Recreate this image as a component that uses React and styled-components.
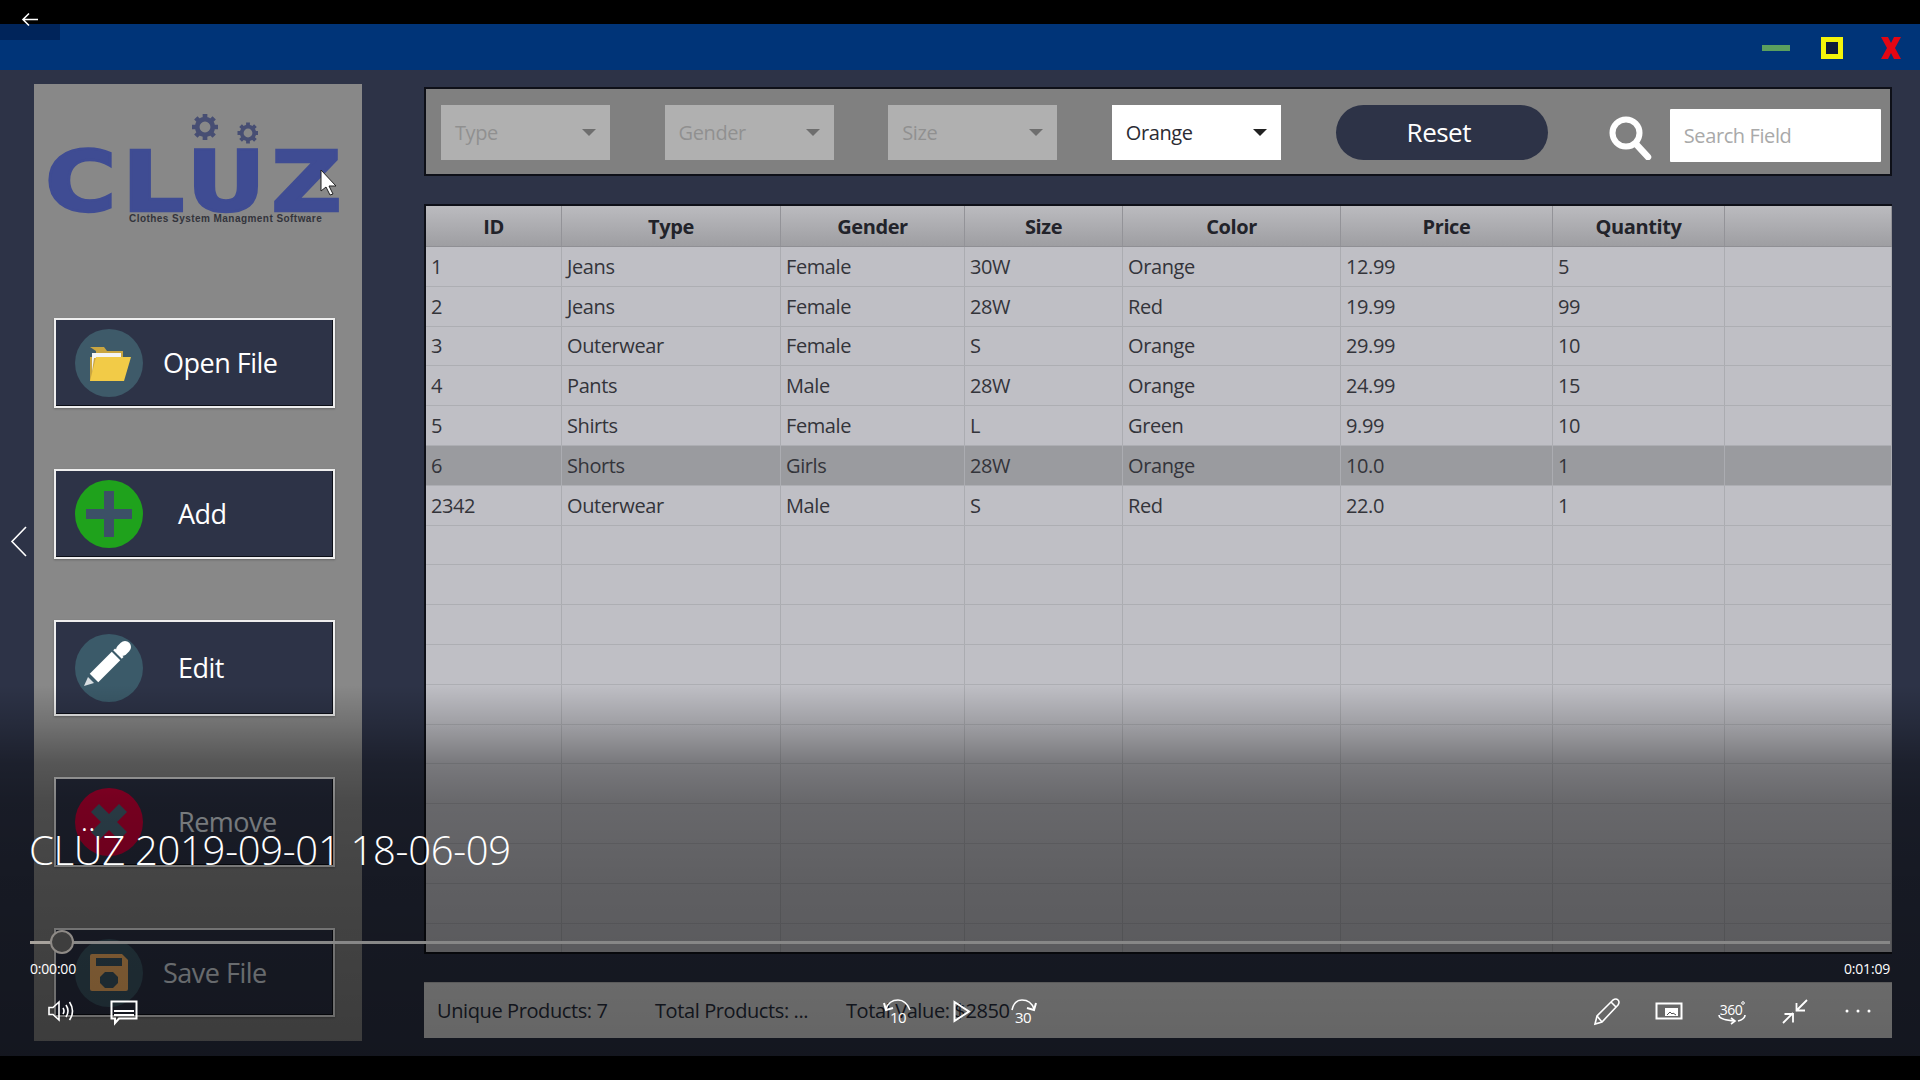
import React from 'react';
import styled, { createGlobalStyle } from 'styled-components';

const Global = createGlobalStyle`
  html, body { margin: 0; padding: 0; background: #000; }
  body { width: 1920px; height: 1080px; overflow: hidden; font-family: "Open Sans", "Noto Sans", sans-serif; letter-spacing: -0.4px; }
  * { box-sizing: border-box; }
`;

const Screen = styled.div`
  position: relative;
  width: 1920px;
  height: 1080px;
  display: flex;
  flex-direction: column;
  background: #000;
  overflow: hidden;
`;
const BlackStrip = styled.div`
  height: 24px;
  flex: none;
  background: #000;
`;
const TitleBar = styled.header`
  height: 46px;
  flex: none;
  background: #003478;
  display: flex;
  align-items: center;
  justify-content: flex-end;
  padding: 2px 18px 0 0;
`;
const WinMin = styled.div`
  width: 28px;
  height: 6px;
  background: #5b9f5e;
  margin-right: 31px;
`;
const WinMax = styled.div`
  width: 22px;
  height: 22px;
  border: 5px solid #f4f40a;
  background: #101c3a;
  margin-right: 37px;
`;
const WinClose = styled.svg`
  width: 22px;
  height: 24px;
  display: block;
`;
const Main = styled.main`
  flex: 1;
  background: #2d3347;
  display: flex;
  align-items: flex-start;
  padding-left: 34px;
`;
const Sidebar = styled.aside`
  width: 328px;
  height: 957px;
  margin-top: 14px;
  background: #888888;
  padding-left: 20px;
  display: flex;
  flex-direction: column;
`;
const LogoBlock = styled.div`
  position: relative;
  height: 234px;
  flex: none;
  margin-left: -6px;
  padding-top: 68px;
`;
const LogoWord = styled.div`
  font-family: "DejaVu Sans", sans-serif;
  font-weight: 700;
  font-size: 84px;
  line-height: 60px;
  letter-spacing: 5px;
  color: #3f4c93;
  -webkit-text-stroke: 2.5px #3f4c93;
  white-space: nowrap;
  transform: translateX(-3px) scaleX(1.158);
  transform-origin: left center;
`;
const LogoTag = styled.div`
  margin: 0 0 0 81px;
  font-family: "Liberation Sans", sans-serif;
  font-weight: 700;
  font-size: 10px;
  line-height: 13px;
  letter-spacing: 0.45px;
  color: #33343c;
  white-space: nowrap;
`;
const Gears = styled.svg`
  position: absolute;
  left: 120px;
  top: 26px;
  width: 90px;
  height: 40px;
`;
const Cursor = styled.svg`
  position: absolute;
  left: 272px;
  top: 85px;
  width: 18px;
  height: 27px;
`;
const SideButtons = styled.div`
  display: flex;
  flex-direction: column;
  gap: 61px;
`;
const SideButton = styled.button`
  width: 281px;
  height: ${p => p.$h}px;
  flex: none;
  padding: 0 0 0 19px;
  display: flex;
  align-items: center;
  gap: ${p => p.$gap}px;
  background: #2d3347;
  border: 2px solid #eeeeee;
  box-shadow: inset -1px -1px 0 #0c0f18, 0 1px 2px rgba(0,0,0,.25);
  color: ${p => p.$dim ? '#dfe4ea' : '#ffffff'};
  font-family: "Open Sans", sans-serif;
  font-size: 27px;
  letter-spacing: -0.5px;
  line-height: 36px;
  cursor: pointer;
`;
const IconDisc = styled.span`
  width: 68px;
  height: 68px;
  flex: none;
  display: block;
`;
const Content = styled.section`
  width: 1468px;
  margin-left: 62px;
  padding-top: 17px;
  display: flex;
  flex-direction: column;
  gap: 28px;
`;
const Toolbar = styled.div`
  height: 89px;
  background: #808080;
  border: 2px solid #0e1018;
  padding: 16px 0 0 15px;
  display: flex;
  align-items: flex-start;
`;
const Selects = styled.div`
  display: flex;
  gap: 54.6px;
`;
const SelectBox = styled.div`
  width: 169px;
  height: 55px;
  padding: 0 14px;
  display: flex;
  align-items: center;
  justify-content: space-between;
  background: ${p => p.$on ? '#ffffff' : '#b0b0b0'};
  color: ${p => p.$on ? '#2b2b33' : '#909090'};
  font-size: 20px;
`;
const Caret = styled.span`
  width: 0;
  height: 0;
  border-left: 7px solid transparent;
  border-right: 7px solid transparent;
  border-top: 7px solid ${p => p.$on ? '#222222' : '#6e6e6e'};
`;
const ResetButton = styled.button`
  width: 212px;
  height: 55px;
  margin-left: 55px;
  padding: 0 6px 2px 0;
  border: 0;
  border-radius: 28px;
  background: #2d3347;
  color: #fff;
  font-family: "Open Sans", sans-serif;
  font-size: 26px;
  letter-spacing: -0.5px;
  cursor: pointer;
`;
const SearchGlass = styled.svg`
  width: 44px;
  height: 44px;
  margin: 11px 0 0 60px;
  flex: none;
`;
const SearchField = styled.div`
  width: 211px;
  height: 53px;
  margin: 4px 0 0 18px;
  padding-left: 14px;
  display: flex;
  align-items: center;
  background: #fff;
  color: #a9a9a9;
  font-size: 20px;
  border-radius: 1px;
`;
const Table = styled.div`
  height: 750px;
  border-top: 2px solid #0e1018;
  border-left: 2px solid #0e1018;
  border-bottom: 2px solid #0e1018;
  background: #bebfc4;
  overflow: hidden;
`;
const Row = styled.div`
  display: grid;
  grid-template-columns: 136px 219px 184px 158px 218px 212px 172px 1fr;
  height: ${p => p.$head ? '41px' : '39.8px'};
  background: ${p => p.$head ? 'linear-gradient(#bbbbbf, #9e9ea2)' : p.$sel ? '#9a9b9f' : '#bfbfc5'};
  border-bottom: 1px solid ${p => p.$head ? '#8f8f94' : '#adaeb3'};
`;
const Cell = styled.div`
  padding-left: 5px;
  display: flex;
  align-items: center;
  border-right: 1px solid #abacb1;
  color: #33343a;
  font-size: 20px;
  white-space: nowrap;
  overflow: hidden;
`;
const HeadCell = styled.div`
  display: flex;
  align-items: center;
  justify-content: center;
  border-right: 1px solid #939398;
  color: #22232a;
  font-size: 20px;
  font-weight: 700;
`;
const StatusBar = styled.footer`
  height: 56px;
  background: #e4e4e4;
  padding-left: 13px;
  display: flex;
  align-items: center;
  color: #2a3040;
  font-size: 20px;
  white-space: nowrap;
  border-top: 1px solid #c4c4c4;
`;
const StatusItem = styled.span`
  width: ${p => p.$w}px;
  flex: none;
`;

const Overlay = styled.div`
  position: absolute;
  inset: 0;
  display: flex;
  flex-direction: column;
  justify-content: flex-end;
  padding: 0 30px 49px;
  background: linear-gradient(to bottom,
    rgba(0,0,0,0) 685px, rgba(0,0,0,.17) 724px, rgba(0,0,0,.37) 763px,
    rgba(0,0,0,.46) 803px, rgba(0,0,0,.5) 880px, rgba(0,0,0,.56) 1056px);
`;
const BackBlock = styled.div`
  position: absolute;
  left: 0;
  top: 0;
  width: 60px;
  height: 40px;
  background: linear-gradient(#000 24px, #00245a 24px);
  display: flex;
  padding: 12px 0 0 21px;
`;
const SideChevron = styled.svg`
  position: absolute;
  left: 9px;
  top: 525px;
  width: 20px;
  height: 33px;
`;
const VideoTitle = styled.div`
  margin: 0 0 50px -1px;
  font-size: 40px;
  font-weight: 300;
  line-height: 60px;
  letter-spacing: -0.3px;
  color: #fff;
  white-space: nowrap;
`;
const Slider = styled.div`
  position: relative;
  height: 24px;
  display: flex;
  align-items: center;
`;
const SliderLine = styled.div`
  flex: 1;
  height: 3px;
  background: linear-gradient(to right, #a8a39d 31px, #878787 31px);
`;
const SliderThumb = styled.span`
  position: absolute;
  left: 20px;
  top: 0;
  width: 24px;
  height: 24px;
  border-radius: 50%;
  border: 2px solid #8e8a86;
  background: #3e3e3e;
`;
const Times = styled.div`
  display: flex;
  justify-content: space-between;
  margin: 5px 0 12px;
  font-size: 14px;
  line-height: 20px;
  letter-spacing: -0.2px;
  color: #fff;
`;
const ControlRow = styled.div`
  display: grid;
  grid-template-columns: 1fr auto 1fr;
  height: 40px;
`;
const ControlGroup = styled.div`
  display: flex;
  gap: 23px;
  justify-content: ${p => p.$align};
  padding: ${p => p.$pad};
`;
const ControlIcon = styled.svg`
  width: 40px;
  height: 40px;
  flex: none;
  fill: none;
  stroke: #fff;
  stroke-width: 1.6;
`;
const IconLabel = styled.text`
  fill: #fff;
  stroke: none;
  font-family: "Open Sans", sans-serif;
  font-size: ${p => p.$size || 15}px;
  letter-spacing: -0.5px;
  text-anchor: middle;
`;

const columns = ['ID', 'Type', 'Gender', 'Size', 'Color', 'Price', 'Quantity', ''];
const rows = [
  ['1', 'Jeans', 'Female', '30W', 'Orange', '12.99', '5'],
  ['2', 'Jeans', 'Female', '28W', 'Red', '19.99', '99'],
  ['3', 'Outerwear', 'Female', 'S', 'Orange', '29.99', '10'],
  ['4', 'Pants', 'Male', '28W', 'Orange', '24.99', '15'],
  ['5', 'Shirts', 'Female', 'L', 'Green', '9.99', '10'],
  ['6', 'Shorts', 'Girls', '28W', 'Orange', '10.0', '1'],
  ['2342', 'Outerwear', 'Male', 'S', 'Red', '22.0', '1'],
  ...Array.from({ length: 11 }, () => ['', '', '', '', '', '', '']),
];

const gearPath = (cx, cy, r, t) => {
  let d = '';
  for (let i = 0; i < 8; i++) {
    const a = (i * Math.PI) / 4;
    d += `M${cx + Math.cos(a) * (r - t)} ${cy + Math.sin(a) * (r - t)}L${cx + Math.cos(a) * r} ${cy + Math.sin(a) * r}`;
  }
  return d;
};

const Gear = ({ cx, cy, r }) => (
  <g>
    <path d={gearPath(cx, cy, r, 5)} stroke="#474e73" strokeWidth={r * 0.36} />
    <circle cx={cx} cy={cy} r={r * 0.6} fill="none" stroke="#474e73" strokeWidth={r * 0.36} />
  </g>
);

const FolderIcon = () => (
  <svg viewBox="0 0 68 68" width="68" height="68">
    <circle cx="34" cy="34" r="34" fill="#3e5a69" />
    <path d="M15 18h14l3 4h16v6H15z M15 18v34h6V22z" fill="#c9a540" />
    <path d="M17 24h29v5H19l-2 14z" fill="#f4f4f4" />
    <path d="M21 28h35l-7 24H15z" fill="#f2cb47" />
  </svg>
);
const AddIcon = () => (
  <svg viewBox="0 0 68 68" width="68" height="68">
    <circle cx="34" cy="34" r="34" fill="#1fa21c" />
    <path d="M29 11h10v18h18v10H39v18H29V39H11V29h18z" fill="#3c5066" />
  </svg>
);
const EditIcon = () => (
  <svg viewBox="0 0 68 68" width="68" height="68">
    <circle cx="34" cy="34" r="34" fill="#3b5a69" />
    <path d="M9 52l4-9 6 6z" fill="#d8dee2" />
    <path d="M19 44l22-22" stroke="#fff" strokeWidth="12" />
    <path d="M42.500 20.500l1.800-1.800" stroke="#fff" strokeWidth="12" />
    <path d="M47 16l3-3" stroke="#fff" strokeWidth="12" strokeLinecap="round" />
  </svg>
);
const RemoveIcon = () => (
  <svg viewBox="0 0 68 68" width="68" height="68">
    <circle cx="34" cy="34" r="34" fill="#d6003a" />
    <path d="M16 24l8-8 10 10 10-10 8 8-10 10 10 10-8 8-10-10-10 10-8-8 10-10z" fill="#4a6a7c" />
  </svg>
);
const SaveIcon = () => (
  <svg viewBox="0 0 68 68" width="68" height="68">
    <circle cx="34" cy="34" r="34" fill="#3e5a69" />
    <path d="M17 15h30l6 6v29a2 2 0 0 1-2 2H17a2 2 0 0 1-2-2V17a2 2 0 0 1 2-2z" fill="#ffb868" />
    <rect x="21" y="19" width="26" height="8" fill="#3e5a69" />
    <path d="M30 33h8l5 5v6l-5 5h-8l-5-5v-6z" fill="#3e5a69" />
  </svg>
);

export default function App() {
  return (
    <Screen>
      <Global />
      <BlackStrip />
      <TitleBar>
        <WinMin />
        <WinMax />
        <WinClose viewBox="0 0 22 24">
          <path d="M1 1h7l3 6 3-6h7l-6 11 6 11h-7l-3-6-3 6H1l6-11z" fill="#e30613" />
        </WinClose>
      </TitleBar>
      <Main>
        <Sidebar>
          <LogoBlock>
            <LogoWord>CLUZ</LogoWord>
            <LogoTag>Clothes System Managment Software</LogoTag>
            <Gears viewBox="0 0 90 40">
              <Gear cx={37} cy={17} r={13} />
              <Gear cx={80} cy={23} r={10.5} />
            </Gears>
            <Cursor viewBox="0 0 18 27">
              <path d="M1 1v21l5-4 4 8 3-1-4-8h7z" fill="#fff" stroke="#222" strokeWidth="1" />
            </Cursor>
          </LogoBlock>
          <SideButtons>
            <SideButton $h={90} $gap={20}><IconDisc><FolderIcon /></IconDisc>Open File</SideButton>
            <SideButton $h={90} $gap={35}><IconDisc><AddIcon /></IconDisc>Add</SideButton>
            <SideButton $h={96} $gap={35}><IconDisc><EditIcon /></IconDisc>Edit</SideButton>
            <SideButton $h={90} $gap={35} $dim><IconDisc><RemoveIcon /></IconDisc>Remove</SideButton>
            <SideButton $h={89} $gap={20} $dim><IconDisc><SaveIcon /></IconDisc>Save File</SideButton>
          </SideButtons>
        </Sidebar>
        <Content>
          <Toolbar>
            <Selects>
              <SelectBox>Type<Caret /></SelectBox>
              <SelectBox>Gender<Caret /></SelectBox>
              <SelectBox>Size<Caret /></SelectBox>
              <SelectBox $on>Orange<Caret $on /></SelectBox>
            </Selects>
            <ResetButton>Reset</ResetButton>
            <SearchGlass viewBox="0 0 44 44">
              <circle cx="18" cy="17" r="13.5" fill="none" stroke="#fff" strokeWidth="6" />
              <path d="M28 28l12 13" stroke="#fff" strokeWidth="6.5" strokeLinecap="round" />
            </SearchGlass>
            <SearchField>Search Field</SearchField>
          </Toolbar>
          <Table>
            <Row $head>
              {columns.map((c, i) => <HeadCell key={i}>{c}</HeadCell>)}
            </Row>
            {rows.map((r, i) => (
              <Row key={i} $sel={i === 5}>
                {r.map((v, j) => <Cell key={j}>{v}</Cell>)}
                <Cell />
              </Row>
            ))}
          </Table>
          <StatusBar>
            <StatusItem $w={218}>Unique Products: 7</StatusItem>
            <StatusItem $w={191}>Total Products: ...</StatusItem>
            <StatusItem $w={200}>Total Value: $2850</StatusItem>
          </StatusBar>
        </Content>
      </Main>
      <BlackStrip />
      <Overlay>
        <BackBlock>
          <svg width="18" height="15" viewBox="0 0 18 15" fill="none" stroke="#fff" strokeWidth="1.6">
            <path d="M17 7.5H2M8 1.5L2 7.5l6 6" />
          </svg>
        </BackBlock>
        <SideChevron viewBox="0 0 20 33" fill="none" stroke="#fff" strokeWidth="1.6">
          <path d="M17 2L3 16.5 17 31" />
        </SideChevron>
        <VideoTitle>CLÜZ 2019-09-01 18-06-09</VideoTitle>
        <Slider>
          <SliderLine />
          <SliderThumb />
        </Slider>
        <Times>
          <span>0:00:00</span>
          <span>0:01:09</span>
        </Times>
        <ControlRow>
          <ControlGroup $align="flex-start" $pad="0 0 0 11px">
            <ControlIcon viewBox="0 0 40 40">
              <path d="M8 16.5h4l6-5.500v18l-6-5.500H8z" />
              <path d="M22 17q2 3 0 6M25 14q4 6 0 12M28.500 11q6 9 0 18" />
            </ControlIcon>
            <ControlIcon viewBox="0 0 40 40">
              <path d="M7.500 10.500h25v17H15l-4 4.500v-4.500H7.500z" strokeWidth="2" />
              <path d="M10 20h20M10 24h20" strokeWidth="2" />
            </ControlIcon>
          </ControlGroup>
          <ControlGroup $align="center">
            <ControlIcon viewBox="0 0 40 40">
              <path d="M9 18q3-9 12-9 8 0 12 10" />
              <path d="M7 12l2 7 7-2" strokeWidth="2" />
              <IconLabel x="21" y="32" $size={15}>10</IconLabel>
            </ControlIcon>
            <ControlIcon viewBox="0 0 40 40">
              <path d="M14.500 11v19L29 20.500z" strokeWidth="2" />
            </ControlIcon>
            <ControlIcon viewBox="0 0 40 40">
              <path d="M31 18q-3-9-12-9-8 0-10 10" />
              <path d="M33 12l-2 7-7-2" strokeWidth="2" />
              <IconLabel x="20" y="32" $size={15}>30</IconLabel>
            </ControlIcon>
          </ControlGroup>
          <ControlGroup $align="flex-end" $pad="0 12px 0 0">
            <ControlIcon viewBox="0 0 40 40">
              <path d="M9 33l2-8L27 9q3-2 5 0t0 5L16 31z" />
              <path d="M11 25l5 6M25 11l5 5" />
            </ControlIcon>
            <ControlIcon viewBox="0 0 40 40">
              <rect x="7.500" y="12.500" width="25" height="15" strokeWidth="2" />
              <rect x="16" y="17" width="13" height="8" fill="#fff" stroke="none" />
              <path d="M18 24l3-3 2 2 1-1 3 2" stroke="#555" strokeWidth="1" />
            </ControlIcon>
            <ControlIcon viewBox="0 0 40 40">
              <IconLabel x="19" y="24" $size={14}>360</IconLabel>
              <circle cx="31" cy="12" r="1.300" strokeWidth="1" />
              <path d="M7 24q0 5 16 6M33 24q0 4-7 6" />
              <path d="M19 27l4 3-4 3" />
            </ControlIcon>
            <ControlIcon viewBox="0 0 40 40">
              <path d="M32 9L21 20M21.500 12v7.500H30M8 32l10-10M9.500 23H18v8.500" strokeWidth="1.800" />
            </ControlIcon>
            <ControlIcon viewBox="0 0 40 40">
              <circle cx="9" cy="20" r="1.500" fill="#fff" stroke="none" />
              <circle cx="20" cy="20" r="1.500" fill="#fff" stroke="none" />
              <circle cx="31" cy="20" r="1.500" fill="#fff" stroke="none" />
            </ControlIcon>
          </ControlGroup>
        </ControlRow>
      </Overlay>
    </Screen>
  );
}
